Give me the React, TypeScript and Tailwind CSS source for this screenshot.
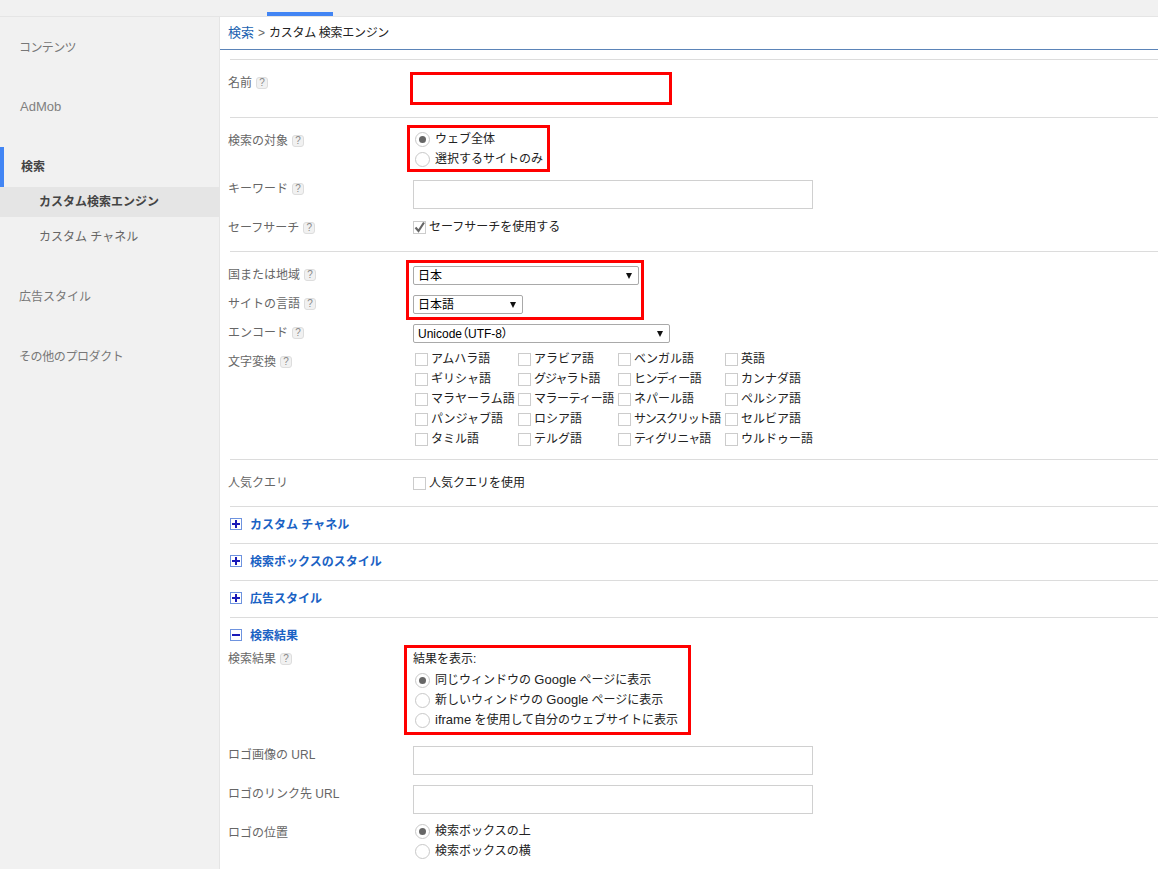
import React from 'react';

const langs = [
  ['アムハラ語', 'アラビア語', 'ベンガル語', '英語'],
  ['ギリシャ語', 'グジャラト語', 'ヒンディー語', 'カンナダ語'],
  ['マラヤーラム語', 'マラーティー語', 'ネパール語', 'ペルシア語'],
  ['パンジャブ語', 'ロシア語', 'サンスクリット語', 'セルビア語'],
  ['タミル語', 'テルグ語', 'ティグリニャ語', 'ウルドゥー語'],
];

// these run narrower in the reference than the fallback font draws them
const tightLangs: Record<string, string> = {
  'サンスクリット語': 'tracking-[-1.2px]',
  'ティグリニャ語': 'tracking-[-1px]',
  'グジャラト語': 'tracking-[-1px]',
  'ヒンディー語': 'tracking-[-0.7px]',
  'マラーティー語': 'tracking-[-0.5px]',
};

function Hint() {
  return (
    <span className="ml-[4px] inline-flex h-[12px] w-[12px] items-center justify-center rounded-[3px] border border-[#dddddd] bg-[#f1f1f1] text-[10px] leading-none text-[#888888]">
      ?
    </span>
  );
}

function Hr() {
  return <div className="ml-[2px] h-px bg-[#dcdcdc]" />;
}

function Label({ text }: { text: string }) {
  return (
    <div className="mt-px flex w-[185px] shrink-0 items-center text-[#666666]">
      <span>{text}</span>
      <Hint />
    </div>
  );
}

function Radio({ checked, label }: { checked?: boolean; label: React.ReactNode }) {
  return (
    <div className="flex h-[20px] items-center text-[#222222]">
      <span className="mr-[5px] ml-[2px] flex h-[15px] w-[15px] items-center justify-center rounded-full border border-[#c8c8c8] bg-white">
        {checked && <span className="h-[7px] w-[7px] rounded-full bg-[#666666]" />}
      </span>
      <span>{label}</span>
    </div>
  );
}

function Check({ checked, label, className }: { checked?: boolean; label: string; className?: string }) {
  return (
    <div className="flex h-[20px] items-center whitespace-nowrap text-[#222222]">
      <span className="relative mr-[3px] h-[13px] w-[13px] shrink-0 border border-[#cccccc] bg-white">
        {checked && (
          <svg viewBox="0 0 13 13" className="absolute -top-px -left-px h-[13px] w-[13px]">
            <path d="M2.5 6.5 L5.5 10 L11 1.5" fill="none" stroke="#666666" strokeWidth="2.2" />
          </svg>
        )}
      </span>
      <span className={className}>{label}</span>
    </div>
  );
}

function Select({ value, width }: { value: string; width: string }) {
  return (
    <div className={`flex h-[19px] items-center justify-between rounded-[2px] border border-[#a9a9a9] bg-white pr-[6px] pl-[4px] text-black [font-feature-settings:'palt'] ${width}`}>
      <span>{value}</span>
      <svg viewBox="0 0 6 6" className="h-[6px] w-[6px]">
        <path d="M0 0 H6 L3 6 Z" fill="#111111" />
      </svg>
    </div>
  );
}

function TextBox() {
  return <div className="h-[29px] w-[400px] border border-[#d0d0d0] bg-white" />;
}

function Section({ open, title }: { open?: boolean; title: string }) {
  return (
    <div className="ml-[2px] flex items-center gap-[8px]">
      <span className="relative mb-[2px] h-[12px] w-[12px] border border-[#6e93df] bg-white">
        <span className="absolute top-[4px] left-[1px] h-[2px] w-[8px] bg-[#1a1ab8]" />
        {!open && <span className="absolute top-[1px] left-[4px] h-[8px] w-[2px] bg-[#1a1ab8]" />}
      </span>
      <span className="font-bold text-[#1a62c4]">{title}</span>
    </div>
  );
}

function NavItem({ text, className }: { text: string; className: string }) {
  return <div className={`flex items-center ${className}`}>{text}</div>;
}

export default function App() {
  return (
    <div className="h-[869px] w-[1158px] overflow-hidden bg-white text-[12px] leading-[20px] font-['Liberation_Sans','Noto_Sans_CJK_JP',sans-serif]">
      <div className="h-[17px] border-b border-[#e5e5e5] bg-[#f1f1f1] pl-[267px]">
        <div className="h-[12px]" />
        <div className="h-[4px] w-[66px] bg-[#4285f4]" />
      </div>
      <div className="flex h-[852px]">
        <aside className="w-[220px] shrink-0 border-r border-[#e5e5e5] bg-[#f1f1f1] pt-[20px] text-[#777777]">
          <NavItem text="コンテンツ" className="h-[20px] pt-px pl-[19px] tracking-[-0.6px]" />
          <NavItem text="AdMob" className="mt-[40px] h-[20px] pl-[20px] text-[13px] text-[#808080]" />
          <div className="mt-[30px] flex h-[40px] items-center border-l-[4px] border-[#4285f4] pl-[17px] font-bold text-[#444444]">
            検索
          </div>
          <NavItem text="カスタム検索エンジン" className="h-[30px] bg-[#e5e5e5] pl-[39px] font-bold text-[#444444]" />
          <NavItem text="カスタム チャネル" className="mt-[5px] h-[30px] pl-[39px] text-[#666666]" />
          <NavItem text="広告スタイル" className="mt-[30px] h-[30px] pl-[19px]" />
          <NavItem text="その他のプロダクト" className="mt-[30px] h-[30px] pl-[19px] tracking-[-0.4px]" />
        </aside>
        <main className="min-w-0 flex-1">
          <div className="flex h-[33px] items-center border-b border-[#5b84b8] pb-px pl-[8px] text-[#222222]">
            <span className="text-[13px] text-[#1a62b0]">検索</span>
            <span className="mx-[4px] text-[#666666]">&gt;</span>
            <span className="tracking-[-0.3px]">カスタム 検索エンジン</span>
          </div>
          <div className="pt-[9px] pl-[8px]">
            <Hr />
            <div className="flex h-[57px] items-start pt-[12px]">
              <Label text="名前" />
              <div className="relative mt-[3px] h-[27px] w-[255px] bg-white">
                <div className="absolute -top-[3px] -left-[3px] h-[33px] w-[262px] border-[3px] border-[#ff0000]" />
              </div>
            </div>
            <Hr />
            <div className="flex h-[62px] items-start pt-[12px]">
              <Label text="検索の対象" />
              <div className="relative -mt-[1px]">
                <Radio checked label="ウェブ全体" />
                <Radio label="選択するサイトのみ" />
                <div className="absolute -top-[4px] -left-[6px] h-[47px] w-[143px] border-[3px] border-[#ff0000]" />
              </div>
            </div>
            <div className="flex h-[29px] items-start">
              <div className="-mt-[2px]"><Label text="キーワード" /></div>
              <TextBox />
            </div>
            <div className="flex h-[42px] items-start pt-[8px]">
              <Label text="セーフサーチ" />
              <Check checked label="セーフサーチを使用する" />
            </div>
            <Hr />
            <div className="flex items-start pt-[14px]">
              <div className="-mt-[2px] w-[185px] shrink-0">
                <div className="flex h-[29px] items-start"><Label text="国または地域" /></div>
                <div className="flex h-[29px] items-start"><Label text="サイトの言語" /></div>
                <div className="flex h-[29px] items-start"><Label text="エンコード" /></div>
                <div className="flex items-start"><Label text="文字変換" /></div>
              </div>
              <div>
                <div className="relative">
                  <Select value="日本" width="w-[226px]" />
                  <div className="mt-[10px]"><Select value="日本語" width="w-[110px]" /></div>
                  <div className="absolute -top-[6px] -left-[7px] h-[60px] w-[238px] border-[3px] border-[#ff0000]" />
                </div>
                <div className="mt-[10px]"><Select value="Unicode（UTF-8）" width="w-[257px]" /></div>
                <div className="mt-[6px] grid grid-cols-[103px_100px_107px_100px] pl-[2px]">
                  {langs.flat().map((l) => (
                    <Check key={l} label={l} className={tightLangs[l]} />
                  ))}
                </div>
              </div>
            </div>
            <div className="mt-[10px]"><Hr /></div>
            <div className="flex h-[46px] items-center">
              <div className="w-[185px] shrink-0 text-[#666666]">人気クエリ</div>
              <Check label="人気クエリを使用" />
            </div>
            <Hr />
            <div className="flex h-[36px] items-center"><Section title="カスタム チャネル" /></div>
            <Hr />
            <div className="flex h-[36px] items-center"><Section title="検索ボックスのスタイル" /></div>
            <Hr />
            <div className="flex h-[36px] items-center"><Section title="広告スタイル" /></div>
            <Hr />
            <div className="flex h-[30px] items-center pt-[5px]"><Section open title="検索結果" /></div>
            <div className="flex items-start pt-[1px]">
              <div className="-mt-px"><Label text="検索結果" /></div>
              <div className="relative w-[280px]">
                <div className="mb-px text-[#222222]">結果を表示:</div>
                <Radio checked label={<>同じウィンドウの <span className="text-[13px]">Google</span> ページに表示</>} />
                <Radio label={<>新しいウィンドウの <span className="text-[13px]">Google</span> ページに表示</>} />
                <Radio label={<><span className="text-[13px]">iframe</span> を使用して自分のウェブサイトに表示</>} />
                <div className="absolute -top-[4px] -left-[9px] h-[90px] w-[287px] border-[3px] border-[#ff0000]" />
              </div>
            </div>
            <div className="mt-[16px] flex h-[39px] items-start">
              <div className="-mt-px w-[185px] shrink-0 text-[#666666]">ロゴ画像の URL</div>
              <TextBox />
            </div>
            <div className="flex h-[35px] items-start">
              <div className="-mt-px w-[185px] shrink-0 text-[#666666]">ロゴのリンク先 URL</div>
              <TextBox />
            </div>
            <div className="flex items-start pt-px">
              <div className="mt-[2px] w-[185px] shrink-0 text-[#666666]">ロゴの位置</div>
              <div>
                <Radio checked label="検索ボックスの上" />
                <Radio label="検索ボックスの横" />
              </div>
            </div>
          </div>
        </main>
      </div>
    </div>
  );
}
